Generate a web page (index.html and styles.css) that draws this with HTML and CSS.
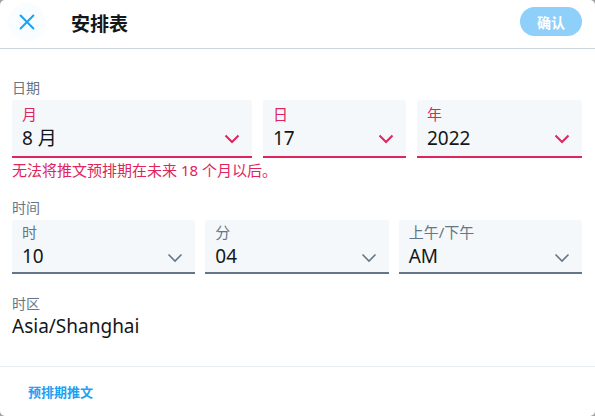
FILE: index.html
```html
<!DOCTYPE html>
<html>
<head>
    <title>安排表</title>
    <link rel="stylesheet" href="styles.css">
</head>
<body>
    <div class="modal">
        <!-- Header -->
        <div class="header">
            <div class="close">
                <svg viewBox="0 0 24 24" width="22" height="22"><path d="M5 5 L19 19 M19 5 L5 19" stroke="#1da1f2" stroke-width="2.2" stroke-linecap="round" fill="none"/></svg>
            </div>
            <h1 class="title">安排表</h1>
            <button class="confirm">确认</button>
        </div>

        <div class="content">
            <p class="section-label">日期</p>
            <div class="row date-row">
                <div class="field error">
                    <span class="field-label">月</span>
                    <span class="field-value">8 月</span>
                    <svg class="chevron" viewBox="0 0 16 10"><path d="M1.5 1.5 L8 8 L14.5 1.5"/></svg>
                </div>
                <div class="field error">
                    <span class="field-label">日</span>
                    <span class="field-value">17</span>
                    <svg class="chevron" viewBox="0 0 16 10"><path d="M1.5 1.5 L8 8 L14.5 1.5"/></svg>
                </div>
                <div class="field error">
                    <span class="field-label">年</span>
                    <span class="field-value">2022</span>
                    <svg class="chevron" viewBox="0 0 16 10"><path d="M1.5 1.5 L8 8 L14.5 1.5"/></svg>
                </div>
            </div>
            <p class="error-text">无法将推文预排期在未来 18 个月以后。</p>

            <p class="section-label time-label">时间</p>
            <div class="row time-row">
                <div class="field">
                    <span class="field-label">时</span>
                    <span class="field-value">10</span>
                    <svg class="chevron" viewBox="0 0 16 10"><path d="M1.5 1.5 L8 8 L14.5 1.5"/></svg>
                </div>
                <div class="field">
                    <span class="field-label">分</span>
                    <span class="field-value">04</span>
                    <svg class="chevron" viewBox="0 0 16 10"><path d="M1.5 1.5 L8 8 L14.5 1.5"/></svg>
                </div>
                <div class="field">
                    <span class="field-label">上午/下午</span>
                    <span class="field-value">AM</span>
                    <svg class="chevron" viewBox="0 0 16 10"><path d="M1.5 1.5 L8 8 L14.5 1.5"/></svg>
                </div>
            </div>

            <p class="section-label zone-label">时区</p>
            <p class="zone-value">Asia/Shanghai</p>
        </div>

        <div class="footer">
            <a class="scheduled">预排期推文</a>
        </div>
    </div>
</body>
</html>
```

FILE: styles.css
```css
html, body {
    margin: 0;
    height: 100%;
    background: #a0a0a0;
    font-family: "Noto Sans", "Noto Sans CJK SC", sans-serif;
}

p { margin: 0; }

.modal {
    height: 416px;
    background: #fff;
    border-radius: 5px;
    display: flex;
    flex-direction: column;
    overflow: hidden;
}

/* Header */
.header {
    height: 48px;
    border-bottom: 1px solid #c9d6df;
    display: flex;
    align-items: center;
    padding: 0 13px 0 8px;
}

.close {
    width: 38px;
    height: 38px;
    border-radius: 50%;
    background: #fafdff;
    display: flex;
    align-items: center;
    justify-content: center;
    margin-top: -4px;
}

.title {
    margin: -3px 0 0 25px;
    font-size: 19px;
    font-weight: 700;
    color: #14171a;
    flex: 1;
}

.confirm {
    width: 62px;
    height: 29px;
    border: none;
    border-radius: 15px;
    background: #8ed0f9;
    color: #fff;
    font-family: inherit;
    font-size: 14px;
    font-weight: 700;
    margin-top: -5px;
    padding: 0;
}

/* Content */
.content {
    flex: 1;
    padding: 29px 13px 0 12px;
}

.section-label {
    font-size: 14px;
    line-height: 20px;
    color: #657786;
}

.row {
    display: grid;
    margin-top: 2px;
}

.date-row {
    grid-template-columns: 240px 143px 165px;
    column-gap: 11px;
}

.time-row {
    grid-template-columns: 1fr 1fr 1fr;
    column-gap: 10px;
}

.field {
    position: relative;
    background: #f5f8fa;
    border-radius: 3px 3px 0 0;
    border-bottom: 2px solid #657786;
    padding: 0 10px;
    display: flex;
    flex-direction: column;
}

.date-row .field { height: 52px; padding-top: 4px; }
.time-row .field { height: 50px; padding-top: 2px; }

.field-label {
    font-size: 15px;
    line-height: 21px;
    color: #657786;
}

.field-value {
    font-size: 19px;
    line-height: 26px;
    color: #14171a;
}

.chevron {
    position: absolute;
    right: 12px;
    bottom: 12px;
    width: 16px;
    height: 10px;
    fill: none;
    stroke: #657786;
    stroke-width: 1.6;
}

.time-row .chevron { bottom: 9px; }

.field.error {
    border-bottom-color: #e0245e;
}

.field.error .field-label { color: #e0245e; }
.field.error .chevron { stroke: #e0245e; stroke-width: 2; }

.error-text {
    font-size: 15px;
    line-height: 18px;
    color: #e0245e;
    margin-top: 3px;
}

.time-label { margin-top: 19px; }
.zone-label { margin-top: 20px; }

.zone-value {
    font-size: 19px;
    line-height: 24px;
    color: #14171a;
}

/* Footer */
.footer {
    height: 49px;
    border-top: 1px solid #e6ecf0;
    padding-left: 28px;
    display: flex;
    align-items: center;
}

.scheduled {
    font-size: 13px;
    font-weight: 700;
    color: #1da1f2;
}
```
